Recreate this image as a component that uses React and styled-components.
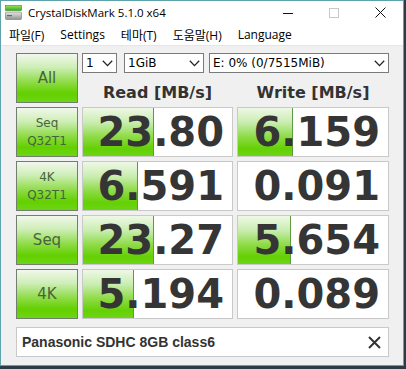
import React from "react";
import styled, { createGlobalStyle } from "styled-components";

const GlobalStyle = createGlobalStyle`
  html, body { margin: 0; padding: 0; background: #2b3c48; }
  * { box-sizing: border-box; }
`;

const Window = styled.div`
  width: 404px;
  height: 366px;
  border: 1px solid #5ea3ab;
  background: #f0f0f0;
  display: flex;
  flex-direction: column;
  overflow: hidden;
`;

const TitleBar = styled.div`
  height: 23px;
  background: #ffffff;
  display: flex;
  align-items: center;
  font-family: "Open Sans", "Noto Sans CJK KR", sans-serif;
  font-size: 11.5px;
  color: #000;
`;

const AppIcon = styled.svg`
  margin-left: 4px;
  width: 17px;
  height: 16px;
  flex: none;
`;

const Title = styled.span`
  margin-left: 6px;
  flex: 1;
`;

const CaptionButton = styled.div`
  width: 46px;
  height: 23px;
  display: flex;
  align-items: center;
  justify-content: center;
`;

const MenuBar = styled.div`
  height: 22px;
  background: #ffffff;
  border-bottom: 1px solid #e6e6e6;
  display: flex;
  align-items: center;
  gap: 16px;
  padding-left: 8px;
  font-family: "Open Sans", "Noto Sans CJK KR", sans-serif;
  font-size: 12px;
  color: #000;
`;

const MenuItem = styled.span``;

const Content = styled.div`
  padding: 7px 0 0 15px;
`;

const Grid = styled.div`
  display: grid;
  grid-template-columns: 62px 151px 152px;
  grid-auto-rows: 50px;
  column-gap: 4px;
  row-gap: 4px;
`;

const LabelButton = styled.div`
  border: 1px solid #737f6e;
  background: linear-gradient(
    to bottom,
    #f1f8ec 0%,
    #cdeeb6 28%,
    #8fdc48 58%,
    #63d000 82%,
    #6cd614 100%
  );
  color: #46653a;
  font-family: "DejaVu Sans", Verdana, sans-serif;
  font-size: ${(p) => (p.$small ? "12px" : "15px")};
  line-height: ${(p) => (p.$small ? "18px" : "20px")};
  display: flex;
  flex-direction: column;
  align-items: center;
  justify-content: center;
  grid-column: 1;
`;

const SelectRow = styled.div`
  grid-column: 2 / 4;
  grid-row: 1;
  align-self: start;
  display: flex;
  height: 20px;
`;

const Select = styled.div`
  width: ${(p) => p.$w}px;
  flex: ${(p) => (p.$grow ? "1" : "none")};
  margin-left: ${(p) => p.$ml || 0}px;
  height: 20px;
  border: 1px solid #7a7a7a;
  background: #ffffff;
  display: flex;
  align-items: center;
  padding-left: 3px;
  padding-right: 3px;
  font-family: "DejaVu Sans", Verdana, sans-serif;
  font-size: 12px;
  color: #000;
`;

const SelectText = styled.span`
  flex: 1;
  white-space: nowrap;
`;

const Header = styled.div`
  grid-row: 1;
  grid-column: ${(p) => p.$col};
  align-self: end;
  text-align: center;
  font-family: "DejaVu Sans", Verdana, sans-serif;
  font-weight: bold;
  font-size: 16px;
  line-height: 20px;
  color: #333333;
`;

const Result = styled.div`
  grid-column: ${(p) => p.$col};
  border: 1px solid #c9c9c9;
  background-color: #ffffff;
  background-image: ${(p) =>
    p.$fill > 0
      ? `linear-gradient(#5e9a42, #5e9a42),
         linear-gradient(to bottom, #eef8e6 0%, #c9edb0 30%, #8edb46 60%, #64d004 85%, #6dd616 100%)`
      : "none"};
  background-size: ${(p) => `1px 100%, ${p.$fill}px 100%`};
  background-position: ${(p) => `${p.$fill - 1}px 0, 0 0`};
  background-repeat: no-repeat;
  display: flex;
  align-items: center;
  justify-content: flex-end;
  padding-right: 8px;
  font-family: "DejaVu Sans", Verdana, sans-serif;
  font-weight: bold;
  font-size: 40px;
  line-height: 1;
  color: #353535;
`;

const Comment = styled.div`
  margin-top: 8px;
  width: 373px;
  height: 30px;
  border: 1px solid #c9c9c9;
  background: #ffffff;
  display: flex;
  align-items: center;
  justify-content: space-between;
  padding: 0 7px 0 5px;
  font-family: "Liberation Sans", Arial, sans-serif;
  font-weight: bold;
  font-size: 14px;
  color: #333333;
`;

const Chevron = () => (
  <svg width="11" height="7" viewBox="0 0 11 7">
    <polyline points="0.8,0.8 5.5,5.6 10.2,0.8" fill="none" stroke="#222" strokeWidth="1.3" />
  </svg>
);

const rows = [
  { label: ["Seq", "Q32T1"], read: "23.80", rf: 71, write: "6.159", wf: 55 },
  { label: ["4K", "Q32T1"], read: "6.591", rf: 55, write: "0.091", wf: 0 },
  { label: ["Seq"], read: "23.27", rf: 71, write: "5.654", wf: 53 },
  { label: ["4K"], read: "5.194", rf: 51, write: "0.089", wf: 0 },
];

export default function App() {
  return (
    <>
      <GlobalStyle />
      <Window>
        <TitleBar>
          <AppIcon viewBox="0 0 17 16">
            <defs>
              <linearGradient id="g1" x1="0" y1="0" x2="0" y2="1">
                <stop offset="0" stopColor="#9be35c" />
                <stop offset="1" stopColor="#33a81c" />
              </linearGradient>
              <linearGradient id="g2" x1="0" y1="0" x2="0" y2="1">
                <stop offset="0" stopColor="#e6e6e6" />
                <stop offset="1" stopColor="#8f9490" />
              </linearGradient>
            </defs>
            <rect x="0.5" y="0.5" width="16" height="5" fill="url(#g1)" stroke="#3a8a2a" strokeWidth="0.6" />
            <rect x="0.5" y="7" width="16" height="7.5" rx="1" fill="url(#g2)" stroke="#777" strokeWidth="0.6" />
            <rect x="2" y="10" width="5" height="1.2" fill="#666" />
          </AppIcon>
          <Title>CrystalDiskMark 5.1.0 x64</Title>
          <CaptionButton>
            <svg width="10" height="10" viewBox="0 0 10 10">
              <line x1="0" y1="5.5" x2="10" y2="5.5" stroke="#111" strokeWidth="1" />
            </svg>
          </CaptionButton>
          <CaptionButton>
            <svg width="10" height="10" viewBox="0 0 10 10">
              <rect x="0.5" y="0.5" width="9" height="9" fill="none" stroke="#c8c8c8" strokeWidth="1" />
            </svg>
          </CaptionButton>
          <CaptionButton>
            <svg width="11" height="11" viewBox="0 0 11 11">
              <path d="M0.5 0.5 L10.5 10.5 M10.5 0.5 L0.5 10.5" stroke="#111" strokeWidth="1" />
            </svg>
          </CaptionButton>
        </TitleBar>
        <MenuBar>
          <MenuItem>파일(F)</MenuItem>
          <MenuItem>Settings</MenuItem>
          <MenuItem>테마(T)</MenuItem>
          <MenuItem>도움말(H)</MenuItem>
          <MenuItem>Language</MenuItem>
        </MenuBar>
        <Content>
          <Grid>
            <LabelButton>All</LabelButton>
            <SelectRow>
              <Select $w={35}>
                <SelectText>1</SelectText>
                <Chevron />
              </Select>
              <Select $w={80} $ml={7}>
                <SelectText>1GiB</SelectText>
                <Chevron />
              </Select>
              <Select $grow $ml={5}>
                <SelectText>E: 0% (0/7515MiB)</SelectText>
                <Chevron />
              </Select>
            </SelectRow>
            <Header $col={2}>Read [MB/s]</Header>
            <Header $col={3}>Write [MB/s]</Header>
            {rows.map((r, i) => (
              <React.Fragment key={i}>
                <LabelButton $small={r.label.length > 1}>
                  {r.label.map((t) => (
                    <span key={t}>{t}</span>
                  ))}
                </LabelButton>
                <Result $col={2} $fill={r.rf}>{r.read}</Result>
                <Result $col={3} $fill={r.wf}>{r.write}</Result>
              </React.Fragment>
            ))}
          </Grid>
          <Comment>
            <span>Panasonic SDHC 8GB class6</span>
            <svg width="13" height="13" viewBox="0 0 13 13">
              <path d="M1 1 L12 12 M12 1 L1 12" stroke="#333" strokeWidth="2" />
            </svg>
          </Comment>
        </Content>
      </Window>
    </>
  );
}
